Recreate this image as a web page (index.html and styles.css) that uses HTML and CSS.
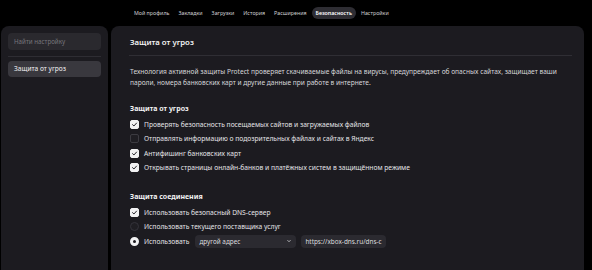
FILE: index.html
```html
<!DOCTYPE html>
<html lang="ru">
<head>
<meta charset="utf-8">
<link rel="stylesheet" href="styles.css">
</head>
<body>
<nav class="topnav">
  <span class="nav-item">Мой профиль</span>
  <span class="nav-item">Закладки</span>
  <span class="nav-item">Загрузки</span>
  <span class="nav-item">История</span>
  <span class="nav-item">Расширения</span>
  <span class="nav-item active">Безопасность</span>
  <span class="nav-item">Настройки</span>
</nav>
<div class="layout">
  <aside class="sidebar">
    <div class="search">Найти настройку</div>
    <div class="side-divider"></div>
    <div class="side-item">Защита от угроз</div>
  </aside>
  <main class="content">
    <h1 class="title">Защита от угроз</h1>
    <div class="divider"></div>
    <p class="desc">Технология активной защиты Protect проверяет скачиваемые файлы на вирусы, предупреждает об опасных сайтах, защищает ваши пароли, номера банковских карт и другие данные при работе в интернете.</p>

    <h2 class="section-title">Защита от угроз</h2>
    <div class="row"><span class="check on"><svg viewBox="0 0 10 10"><path d="M2.2 5.2 L4.2 7.1 L7.9 3"/></svg></span>Проверять безопасность посещаемых сайтов и загружаемых файлов</div>
    <div class="row"><span class="check"></span>Отправлять информацию о подозрительных файлах и сайтах в Яндекс</div>
    <div class="row"><span class="check on"><svg viewBox="0 0 10 10"><path d="M2.2 5.2 L4.2 7.1 L7.9 3"/></svg></span>Антифишинг банковских карт</div>
    <div class="row"><span class="check on"><svg viewBox="0 0 10 10"><path d="M2.2 5.2 L4.2 7.1 L7.9 3"/></svg></span>Открывать страницы онлайн-банков и платёжных систем в защищённом режиме</div>

    <h2 class="section-title second">Защита соединения</h2>
    <div class="row"><span class="check on"><svg viewBox="0 0 10 10"><path d="M2.2 5.2 L4.2 7.1 L7.9 3"/></svg></span>Использовать безопасный DNS-сервер</div>
    <div class="row"><span class="radio"></span>Использовать текущего поставщика услуг</div>
    <div class="row"><span class="radio on"></span>Использовать
      <div class="select">другой адрес<svg class="chev" viewBox="0 0 8 8"><path d="M2.5 3.2 L4 4.7 L5.5 3.2"/></svg></div>
      <div class="input">https://xbox-dns.ru/dns-c</div>
    </div>
  </main>
</div>
</body>
</html>
```

FILE: styles.css
```css
* { box-sizing: border-box; }
html, body { margin: 0; padding: 0; }
body {
  width: 592px;
  height: 270px;
  overflow: hidden;
  background: #000;
  font-family: "Noto Sans", "Liberation Sans", sans-serif;
  color: #e8e8ea;
}
.topnav {
  height: 26px;
  display: flex;
  align-items: center;
  gap: 1px;
  padding-left: 130px;
}
.nav-item {
  font-size: 5.3px;
  color: #cfcfd2;
  padding: 0 4px;
  height: 12px;
  line-height: 12px;
  border-radius: 6px;
}
.nav-item.active {
  background: #2e2d33;
  color: #fff;
  font-weight: 600;
}
.layout {
  display: flex;
  gap: 3px;
  padding: 0 8px 0 1px;
  height: 244px;
}
.sidebar {
  width: 107px;
  background: #1c1b20;
  border-radius: 8px 8px 0 0;
  padding: 7px 7px 0;
}
.search {
  height: 17px;
  border-radius: 4px;
  background: #2a292e;
  color: #77767c;
  font-size: 6.2px;
  line-height: 17px;
  padding-left: 6px;
}
.side-divider {
  height: 1px;
  background: #2e2d33;
  margin: 6px 0 4px;
}
.side-item {
  height: 16px;
  border-radius: 4px;
  background: #39383e;
  font-size: 6.6px;
  line-height: 16px;
  padding-left: 6px;
  color: #f2f2f3;
}
.content {
  flex: 1;
  background: #1c1b20;
  border-radius: 8px 8px 0 0;
  padding: 9px 12px 0 18px;
}
.title {
  margin: 0;
  font-size: 7.8px;
  font-weight: 600;
  line-height: 14px;
  padding-left: 1px;
  color: #f4f4f5;
}
.divider {
  height: 1px;
  background: #2f2e34;
  margin: 6px 0 10px;
}
.desc {
  margin: 0 0 0 1px;
  font-size: 6.6px;
  line-height: 11px;
  color: #d6d6d9;
}
.section-title {
  margin: 15px 0 3px 1px;
  font-size: 7px;
  font-weight: 700;
  line-height: 11px;
  color: #f2f2f3;
}
.section-title.second { margin-top: 16px; }
.row {
  display: flex;
  align-items: center;
  height: 14.5px;
  font-size: 6.7px;
  color: #e4e4e7;
}
.check {
  width: 9px;
  height: 9px;
  border-radius: 2px;
  border: 1px solid #3c3b41;
  background: #1f1e23;
  margin: 0 5px 0 1px;
  display: flex;
  flex-shrink: 0;
}
.check.on {
  background: #f2f2f3;
  border-color: #f2f2f3;
}
.check svg {
  width: 100%;
  height: 100%;
  fill: none;
  stroke: #1c1b20;
  stroke-width: 1.4;
  stroke-linecap: round;
  stroke-linejoin: round;
}
.radio {
  width: 9px;
  height: 9px;
  border-radius: 50%;
  border: 1px solid #34333a;
  background: #1f1e23;
  margin: 0 5px 0 1px;
  flex-shrink: 0;
}
.radio.on {
  background: #1c1b20;
  border: 3px solid #f2f2f3;
}
.select {
  width: 101px;
  height: 13px;
  margin-left: 6px;
  border-radius: 4px;
  background: #2b2a30;
  display: flex;
  align-items: center;
  justify-content: space-between;
  padding: 0 3px 0 4px;
  font-size: 6.4px;
  color: #dcdcde;
}
.chev {
  width: 8px;
  height: 8px;
  fill: none;
  stroke: #c9c9cc;
  stroke-width: 0.9;
}
.input {
  width: 85px;
  height: 13px;
  margin-left: 5px;
  border-radius: 4px;
  background: #2b2a30;
  font-size: 6.4px;
  line-height: 13px;
  padding-left: 4px;
  color: #dcdcde;
  white-space: nowrap;
  overflow: hidden;
}
```
